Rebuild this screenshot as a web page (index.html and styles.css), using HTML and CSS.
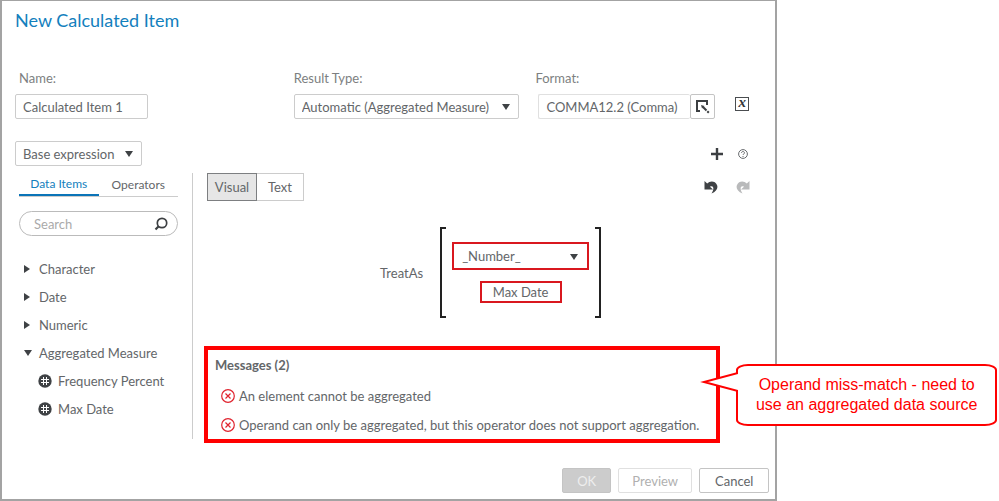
FILE: index.html
```html
<!DOCTYPE html>
<html lang="en">
<head>
  <meta charset="UTF-8" />
  <meta name="viewport" content="width=device-width, initial-scale=1.0"/>
  <title>New Calculated Item</title>
  <link rel="stylesheet" href="styles.css">
</head>
<body>
  <main class="dialog">
    <h1>New Calculated Item</h1>

    <div class="fields">
      <div class="field">
        <label for="name">Name:</label>
        <input type="text" id="name" class="box name-input" value="Calculated Item 1" />
      </div>
      <div class="field">
        <label for="resultType">Result Type:</label>
        <div class="select result-select">
          <select id="resultType" class="box"><option>Automatic (Aggregated Measure)</option></select>
        </div>
      </div>
      <div class="field format-field">
        <label for="format">Format:</label>
        <div class="format">
          <input type="text" id="format" class="box" value="COMMA12.2 (Comma)" />
          <button class="format-btn" aria-label="Select format">
            <svg width="15" height="15" viewBox="0 0 15 15"><path d="M12 6V2H2v10h3" fill="none" stroke="#3c3f42" stroke-width="2"/><path d="M6 6l1 3.500 2.500-2.500z" fill="#3c3f42"/><path d="M8 8l3.500 3.500M12.300 12.300l1.500 1.500" stroke="#3c3f42" stroke-width="2"/></svg>
          </button>
        </div>
      </div>
      <button class="icon-btn" aria-label="Parameters"><span class="param">x</span></button>
    </div>

    <div class="toolbar">
      <div class="select base-select">
        <select class="box" aria-label="Expression"><option>Base expression</option></select>
      </div>
      <div class="tools">
        <button class="icon-btn" aria-label="Add">
          <svg width="14" height="14" viewBox="0 0 14 14"><path d="M7 1v12M1 7h12" stroke="#3c3f42" stroke-width="2.400"/></svg>
        </button>
        <button class="icon-btn" aria-label="Help">
          <svg width="14" height="14" viewBox="0 0 14 14"><circle cx="7" cy="7" r="4.400" fill="none" stroke="#686b6e"/><path d="M5.500 6c0-2 3-2 3 0 0 .9-1.500 1-1.500 2M7 9v1" fill="none" stroke="#686b6e"/></svg>
        </button>
      </div>
    </div>

    <div class="content">
      <aside class="sidebar">
        <div class="tabs">
          <button class="tab active">Data Items</button>
          <button class="tab">Operators</button>
        </div>
        <div class="search">
          <input type="text" placeholder="Search" aria-label="Search" />
          <svg width="14" height="14" viewBox="0 0 14 14"><circle cx="8" cy="6" r="4.700" fill="none" stroke="#3c3f42" stroke-width="1.700"/><path d="M4.700 9.300L1.500 12.500" stroke="#3c3f42" stroke-width="2.200"/></svg>
        </div>
        <ul class="tree">
          <li><span class="arrow"></span>Character</li>
          <li><span class="arrow"></span>Date</li>
          <li><span class="arrow"></span>Numeric</li>
          <li><span class="arrow open"></span>Aggregated Measure</li>
          <li class="child"><svg width="14" height="14" viewBox="0 0 14 14"><circle cx="7" cy="7" r="6.700" fill="#3f4245"/><path d="M5.500 3v8M8.500 3v8M3 5.500h8M3 8.500h8" stroke="#fff"/></svg>Frequency Percent</li>
          <li class="child"><svg width="14" height="14" viewBox="0 0 14 14"><circle cx="7" cy="7" r="6.700" fill="#3f4245"/><path d="M5.500 3v8M8.500 3v8M3 5.500h8M3 8.500h8" stroke="#fff"/></svg>Max Date</li>
        </ul>
      </aside>

      <section class="editor">
        <div class="editor-bar">
          <div class="modes">
            <button class="mode active">Visual</button>
            <button class="mode">Text</button>
          </div>
          <div class="tools">
            <button class="icon-btn undo" aria-label="Undo">
              <svg width="14" height="14" viewBox="0 0 14 14"><path d="M.5 1v8.500H9L6 6.800C9 5.200 11 8 7.500 13.500 12.500 11.500 14.300 8 13 5 11.300.8 6 .5 3.200 3.500z" fill="#3f4245"/></svg>
            </button>
            <button class="icon-btn" aria-label="Redo" disabled>
              <svg width="14" height="14" viewBox="0 0 14 14"><path d="M13.500 1v8.500H5L8 6.800C5 5.200 3 8 6.500 13.500 1.500 11.500-.3 8 1 5 2.700.8 8 .5 10.800 3.500z" fill="#b9babb"/></svg>
            </button>
          </div>
        </div>

        <div class="expression">
          <span>TreatAs</span>
          <div class="bracket left"></div>
          <div class="operands">
            <div class="select operand-select">
              <select aria-label="Type"><option>_Number_</option></select>
            </div>
            <button class="operand">Max Date</button>
          </div>
          <div class="bracket right"></div>
        </div>

        <div class="messages">
          <h2>Messages (2)</h2>
          <ul>
            <li><svg width="14" height="14" viewBox="0 0 14 14"><circle cx="7" cy="7" r="6.300" fill="none" stroke="#e0232e" stroke-width="1.200"/><path d="M4.500 4.500l5 5M9.500 4.500l-5 5" stroke="#e0232e" stroke-width="1.200"/></svg>An element cannot be aggregated</li>
            <li><svg width="14" height="14" viewBox="0 0 14 14"><circle cx="7" cy="7" r="6.300" fill="none" stroke="#e0232e" stroke-width="1.200"/><path d="M4.500 4.500l5 5M9.500 4.500l-5 5" stroke="#e0232e" stroke-width="1.200"/></svg>Operand can only be aggregated, but this operator does not support aggregation.</li>
          </ul>
          <div class="callout">
            <svg class="pointer" width="38" height="22" viewBox="0 0 38 22"><path d="M38 2L4 11l34 9" fill="#fff" stroke="#f00" stroke-width="2"/></svg>
            Operand miss-match - need to<br>use an aggregated data source
          </div>
        </div>
      </section>
    </div>

    <footer class="actions">
      <button class="action ok" disabled>OK</button>
      <button class="action preview" disabled>Preview</button>
      <button class="action">Cancel</button>
    </footer>
  </main>
</body>
</html>
```

FILE: styles.css
```css
* {
  box-sizing: border-box;
}
body {
  margin: 0;
  background: #fff;
  font-family: Lato, "Liberation Sans", sans-serif;
  font-size: 13px;
  line-height: 16px;
  color: #636669;
}
button, input, select {
  font: inherit;
  color: inherit;
  margin: 0;
}
button {
  padding: 0;
  background: none;
  border: none;
}
svg {
  display: block;
  flex: none;
}
ul {
  list-style: none;
  margin: 0;
  padding: 0;
}
.dialog {
  width: 77.8%;
  min-width: 740px;
  min-height: 100vh;
  padding: 5px 6px 6px 13px;
  border: 2px solid #a3a3a3;
  border-top-width: 1px;
  display: flex;
  flex-direction: column;
}
h1 {
  margin: 0 0 36px;
  font-size: 18px;
  font-weight: normal;
  line-height: 28px;
  color: #1380bd;
}

/* fields */
.fields {
  display: grid;
  grid-template-columns: 279fr 242fr 200fr 14px;
  align-items: end;
  padding-right: 20px;
}
.field label {
  display: block;
  padding-left: 4px;
  margin-bottom: 8px;
  color: #7d7f81;
}
.field:nth-child(2) label {
  padding-left: 0;
}
.field.format-field label {
  padding-left: 0;
}
.box {
  height: 25px;
  padding: 0 7px;
  border: 1px solid #ccc;
  border-radius: 2px;
  background: #fff;
}
.name-input {
  width: 133px;
}
.select {
  position: relative;
}
.select select {
  width: 100%;
  appearance: none;
}
.select::after {
  content: "";
  position: absolute;
  right: 9px;
  top: 10px;
  border: 4px solid transparent;
  border-top: 6px solid #3f4245;
  border-bottom: none;
  pointer-events: none;
}
.result-select {
  width: 225px;
}
.format {
  display: flex;
  padding-left: 3px;
}
.format .box {
  width: 152px;
  border-color: #e0e0e0;
  border-right: none;
}
.format-btn {
  width: 25px;
  height: 25px;
  border: 1px solid #c4c4c4;
  border-radius: 2px;
  display: grid;
  place-items: center;
}
.icon-btn {
  display: block;
}
.fields .icon-btn {
  margin-bottom: 8px;
}
.param {
  display: block;
  width: 14px;
  height: 14px;
  border: 1px solid #4a4d50;
  color: #34373a;
  font: italic bold 15px/9px "Liberation Serif", serif;
  text-align: center;
}
.toolbar {
  display: flex;
  justify-content: space-between;
  align-items: center;
  margin-top: 22px;
  padding-right: 19px;
}
.base-select {
  width: 127px;
}
.tools {
  display: flex;
  gap: 12px;
}

/* content */
.content {
  display: flex;
  margin-top: 7px;
}
.sidebar {
  width: 178px;
  height: 266px;
  padding: 0 14px 0 4px;
  border-right: 1px solid #ccc;
  flex: none;
}
.tabs {
  display: flex;
  border-bottom: 1px solid #ccc;
}
.tab {
  height: 23px;
  font-size: 12px;
  flex: 1;
}
.tab.active {
  color: #1380bd;
  border-bottom: 2px solid #0b74b8;
}
.search {
  display: flex;
  align-items: center;
  height: 25px;
  margin: 14px 0 25px;
  padding: 0 9px 0 14px;
  border: 1px solid #bbb;
  border-radius: 13px;
}
.search input {
  width: 100%;
  min-width: 0;
  padding: 0;
  border: none;
  outline: none;
  background: none;
}
.search input::placeholder {
  color: #aaa;
}
.tree {
  white-space: nowrap;
}
.tree li {
  display: flex;
  align-items: center;
  height: 16px;
  margin-bottom: 12px;
  padding-left: 5px;
}
.tree li.child {
  padding-left: 19px;
  gap: 6px;
}
.arrow {
  width: 15px;
}
.arrow::before {
  content: "";
  display: block;
  width: 0;
  border: 4px solid transparent;
  border-left: 6px solid #3f4245;
  border-right: none;
}
.arrow.open::before {
  border: 4px solid transparent;
  border-top: 6px solid #3f4245;
  border-bottom: none;
}

/* editor */
.editor {
  flex: 1;
  padding-left: 11px;
}
.editor-bar {
  display: flex;
  justify-content: space-between;
  align-items: center;
  padding: 0 19px 0 3px;
}
.undo {
  margin-right: 6px;
}
.modes {
  display: flex;
}
.mode {
  width: 47px;
  height: 28px;
  border: 1px solid #ccc;
  border-left: none;
}
.mode.active {
  width: 50px;
  border: 1px solid #7d7f81;
  background: #e6e6e6;
}
.expression {
  display: flex;
  justify-content: center;
  align-items: center;
  margin: 26px 0 28px;
  padding-left: 8px;
}
.bracket {
  width: 6px;
  height: 91px;
  border: 2px solid #222;
}
.bracket.left {
  margin-left: 17px;
  border-right: none;
}
.bracket.right {
  border-left: none;
}
.operands {
  width: 137px;
  margin: 0 6px;
  display: flex;
  flex-direction: column;
  align-items: center;
  gap: 11px;
}
.operand-select {
  width: 100%;
}
.operand-select select {
  display: block;
  height: 28px;
  padding: 0 8px;
  border: 2px solid #d9181f;
  border-radius: 0;
  background: #fff;
}
.operand-select::after {
  top: 12px;
  right: 11px;
}
.operand {
  width: 82px;
  height: 22px;
  border: 2px solid #d9181f;
}
.messages {
  position: relative;
  margin-right: 49px;
  padding: 7px 7px 6px;
  border: 4px solid #f00;
  white-space: nowrap;
}
.messages h2 {
  margin: 0 0 15px;
  font-size: 13px;
  line-height: 16px;
}
.messages li {
  display: flex;
  align-items: center;
  gap: 4px;
  padding-left: 6px;
}
.messages li + li {
  margin-top: 13px;
}
.callout {
  position: absolute;
  top: 14px;
  left: calc(100% + 20px);
  width: 261px;
  padding: 9px 0;
  border: 2px solid #f00;
  border-radius: 12px / 6px;
  background: #fff;
  color: #f00;
  font: 16px/20px "Liberation Sans", Arial, sans-serif;
  text-align: center;
}
.pointer {
  position: absolute;
  right: 100%;
  top: 5px;
  z-index: 1;
}

/* buttons */
.actions {
  display: flex;
  justify-content: flex-end;
  gap: 7px;
  margin-top: auto;
}
.action {
  width: 70px;
  height: 25px;
  border: 1px solid #c4c4c4;
  border-radius: 2px;
}
.action.ok {
  width: 49px;
  background: #ccc;
  color: #eee;
}
.action.preview {
  width: 74px;
  border-color: #e0e0e0;
  color: #b0b0b0;
}
```
